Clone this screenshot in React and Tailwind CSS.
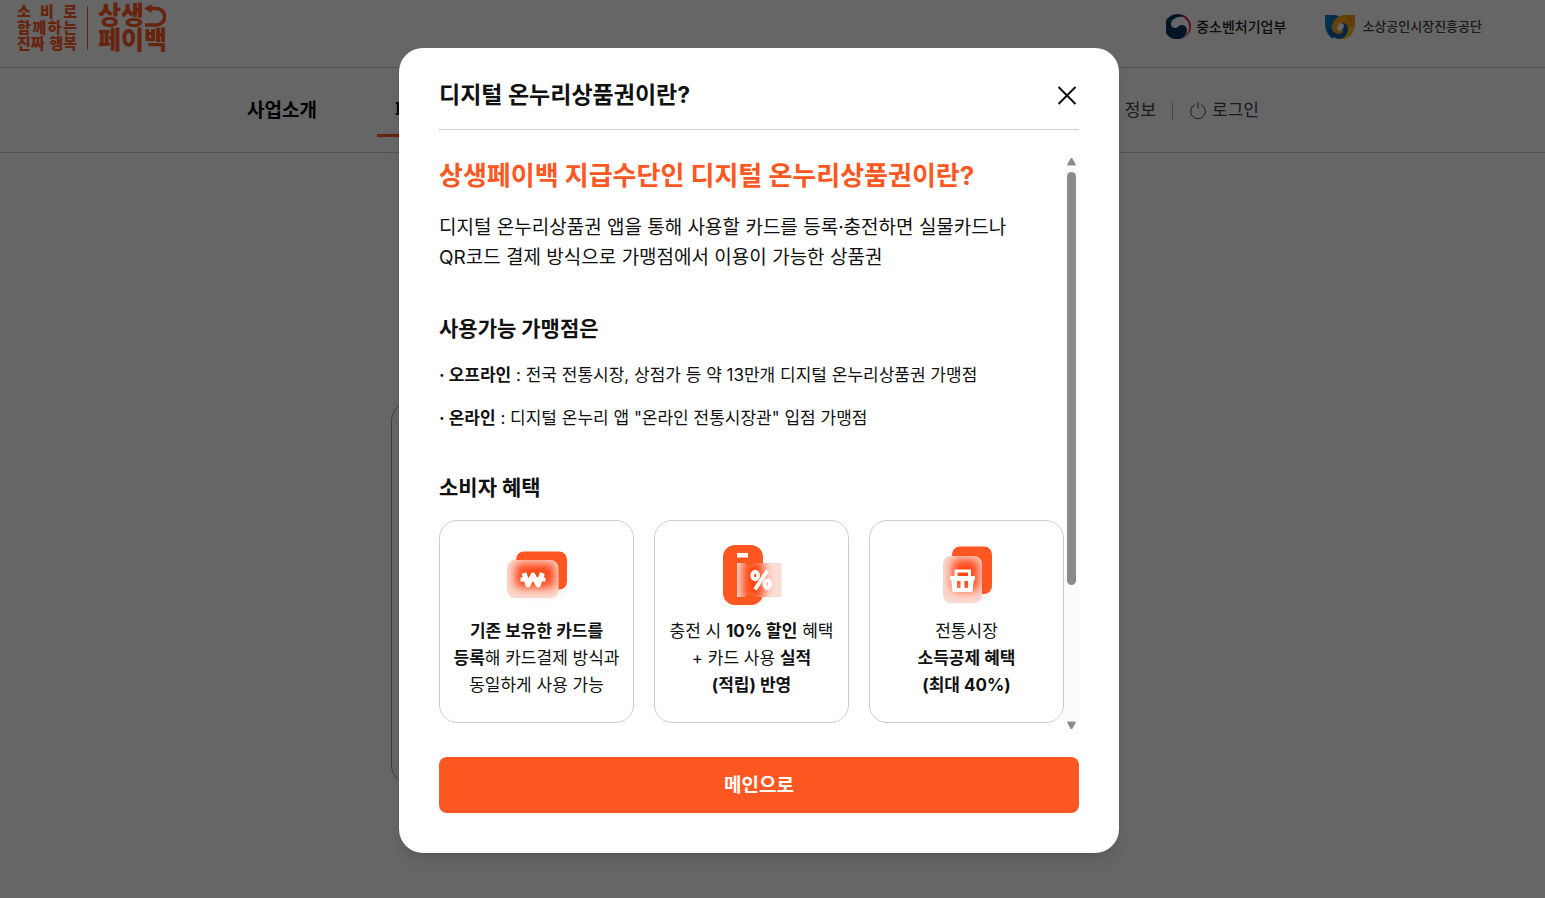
import { clsx } from "clsx";

const CARDS = [
  {
    icon: WonCardIcon,
    lines: [
      <b key="a">기존 보유한 카드를</b>,
      <span key="b">
        <b>등록</b>해 카드결제 방식과
      </span>,
      <span key="c">동일하게 사용 가능</span>,
    ],
  },
  {
    icon: CouponIcon,
    lines: [
      <span key="a">
        충전 시 <b>10% 할인</b> 혜택
      </span>,
      <span key="b">
        + 카드 사용 <b>실적</b>
      </span>,
      <b key="c">(적립) 반영</b>,
    ],
  },
  {
    icon: BasketIcon,
    lines: [
      <span key="a">전통시장</span>,
      <b key="b">소득공제 혜택</b>,
      <b key="c">(최대 40%)</b>,
    ],
  },
];

function WonCardIcon() {
  return (
    <svg viewBox="0 0 60 60" className="size-[60px] overflow-visible" aria-hidden="true">
      <defs>
        <filter id="won-blur" x="-50%" y="-50%" width="200%" height="200%">
          <feGaussianBlur stdDeviation="5" />
        </filter>
        <clipPath id="won-clip">
          <rect x="0" y="15" width="51.500" height="38" rx="8" />
        </clipPath>
      </defs>
      <rect x="8" y="12" width="48" height="38" rx="9" fill="#ff5722" opacity=".16" filter="url(#won-blur)" />
      <rect x="9" y="6.500" width="51" height="38" rx="8" fill="#ff5722" />
      <g clipPath="url(#won-clip)">
        <rect x="0" y="15" width="52" height="38" fill="#fbd8cf" />
        <rect x="8" y="18" width="40" height="25" rx="5" fill="#ff4712" filter="url(#won-blur)" />
      </g>
      <path d="M17 28l4 12 5-10 5 10 4.500-12" fill="none" stroke="#fff" strokeWidth="5" strokeLinejoin="round" />
      <path d="M13.500 34.500h25" stroke="#fff" strokeWidth="4" />
    </svg>
  );
}

function CouponIcon() {
  return (
    <svg viewBox="0 0 60 60" className="size-[60px] overflow-visible" aria-hidden="true">
      <defs>
        <filter id="cp-blur" x="-50%" y="-50%" width="200%" height="200%">
          <feGaussianBlur stdDeviation="5" />
        </filter>
        <clipPath id="cp-clip">
          <path d="M15 18h8a5 4 0 0 0 10 0h26.500v34H33a5 4 0 0 0-10 0h-8z" />
        </clipPath>
      </defs>
      <rect x="18" y="18" width="24" height="38" rx="9" fill="#ff5722" opacity=".35" filter="url(#cp-blur)" />
      <rect x="1" y="0" width="40" height="60" rx="12" fill="#ff5722" />
      <rect x="15" y="8" width="11" height="4.500" fill="#fff" />
      <g clipPath="url(#cp-clip)">
        <rect x="15" y="18" width="45" height="34" fill="#fbdcd5" />
        <rect x="20" y="14" width="22" height="42" rx="6" fill="#ff4a16" filter="url(#cp-blur)" />
      </g>
      <g fill="none" stroke="#fff" strokeWidth="3.800">
        <ellipse cx="33.200" cy="30.500" rx="2.900" ry="3.800" />
        <ellipse cx="45.200" cy="39" rx="2.900" ry="3.800" />
        <path d="M45.500 25.500L33 44.500" />
      </g>
    </svg>
  );
}

function BasketIcon() {
  return (
    <svg viewBox="0 0 60 60" className="size-[60px] overflow-visible" aria-hidden="true">
      <defs>
        <filter id="bk-blur" x="-50%" y="-50%" width="200%" height="200%">
          <feGaussianBlur stdDeviation="5" />
        </filter>
        <clipPath id="bk-clip">
          <rect x="6" y="11" width="39" height="47" rx="8" />
        </clipPath>
      </defs>
      <rect x="12" y="10" width="38" height="42" rx="9" fill="#ff5722" opacity=".2" filter="url(#bk-blur)" />
      <rect x="15" y="1.500" width="40" height="47.500" rx="8" fill="#ff5722" />
      <g clipPath="url(#bk-clip)">
        <rect x="6" y="11" width="39" height="47" fill="#fbd8cf" />
        <rect x="15" y="14" width="27" height="32" rx="5" fill="#ff4712" filter="url(#bk-blur)" />
      </g>
      <path d="M19 32v-6h13.500v6" fill="none" stroke="#fff" strokeWidth="3" />
      <path
        d="M13 31h25v4h-1.200L35.500 47h-20L14.200 35H13zM20 36v7h3.500v-7zM27.500 36v7H31v-7z"
        fill="#fff"
        fillRule="evenodd"
      />
    </svg>
  );
}

function BrandLogo() {
  return (
    <a href="#home" className="flex items-center text-[#ff5722]">
      <span className="flex w-[60px] flex-col text-[15px] leading-4 font-black">
        <span className="flex justify-between">
          <span>소</span>
          <span>비</span>
          <span>로</span>
        </span>
        <span className="flex justify-between">
          <span>함</span>
          <span>께</span>
          <span>하</span>
          <span>는</span>
        </span>
        <span className="flex justify-between">
          <span>진짜</span>
          <span>행복</span>
        </span>
      </span>
      <span className="mx-2.5 h-11 w-px bg-[#ff5722]" />
      <span className="flex flex-col text-[25px] leading-[25px] font-black">
        <span className="flex items-center">
          상생
          <svg viewBox="0 0 22 24" className="h-6 w-[22px]" fill="none" aria-hidden="true">
            <path d="M6 4.500h6.500a7.800 7.800 0 0 1 0 16.500H1" stroke="currentColor" strokeWidth="3.600" />
            <path d="M0 4.500L7.500 0v9z" fill="currentColor" />
          </svg>
        </span>
        <span>페이백</span>
      </span>
    </a>
  );
}

function MinistryMark() {
  return (
    <svg viewBox="0 0 25 25" className="size-[25px]" aria-hidden="true">
      <circle cx="12.500" cy="12.500" r="12.500" fill="#e4173e" />
      <circle cx="11.400" cy="13.300" r="11.800" fill="#fff" />
      <path
        d="M18 2.500A12.500 12.500 0 1 0 15 24.500C20 22 22 17.500 20.500 14c-1.500-3.800-6-4-8.500-1.300-2.200 2.300-6.800 1.500-7-2.200C4.600 6 10 2.300 18 2.500z"
        fill="#003764"
      />
    </svg>
  );
}

function AgencyMark() {
  return (
    <svg viewBox="0 0 30 24" className="h-6 w-[30px]" aria-hidden="true">
      <path d="M0 0h9c3 0 5 1 6 2.500L9 9 8 24C3 21 0 15 0 8z" fill="#0a7cc4" />
      <path d="M30 0v8c0 9-5 16-14 16l3-13-6-8c2-2 4-3 8-3z" fill="#f7941d" />
      <path d="M30 9c-.5 9-5.500 15-14 15l5-10z" fill="#fbb714" />
      <path d="M1.500 13C4 20 9 24 15 24c6-1.500 9-7 7.500-12C21.500 8.500 18.500 7 16 8l-7 9z" fill="#0c5aa8" />
      <path d="M21 0C13 0 7.500 5.500 7 11.500c-.3 4.500 3 7.500 6.500 7.500 2.500 0 4.500-1.500 5-4-4 2.500-7-2.500-3-6.500 2.500-1.700 5-1 7 2z" fill="#f9a51a" />
      <ellipse cx="15.500" cy="12" rx="3" ry="4" transform="rotate(30 15.500 12)" fill="#fff" />
    </svg>
  );
}

function Header() {
  return (
    <header className="bg-white">
      <div className="flex h-[68px] items-start justify-between border-b border-[#ccc] pt-[3px] pr-[63px] pl-[17px]">
        <BrandLogo />
        <div className="flex items-center gap-[39px] pt-[11px] text-[#222]">
          <a href="#ministry" className="flex items-center gap-[5px] text-sm font-medium">
            <MinistryMark />
            중소벤처기업부
          </a>
          <a href="#agency" className="flex items-center gap-[7px] text-[13px] font-medium text-[#444]">
            <AgencyMark />
            소상공인시장진흥공단
          </a>
        </div>
      </div>
      <div className="border-b border-[#ccc] pr-[27px]">
        <nav className="mx-auto flex h-[84px] w-full max-w-[1024px] items-center justify-between pr-3">
          <div className="flex h-full gap-[60px] text-[19px] font-bold text-black">
            <a href="#about" className="flex items-center pt-0.5">
              사업소개
            </a>
            <a href="#payback" className="relative flex items-center px-[18px] pt-0.5">
              페이백
              <span className="absolute inset-x-0 bottom-[15px] h-[3px] bg-[#ff5722]" />
            </a>
          </div>
          <div className="flex items-center pt-0.5 text-[17px] text-[#444]">
            <a href="#info">정보</a>
            <span className="mx-4 h-5 w-px bg-[#bbb]" />
            <a href="#login" className="flex items-center gap-[5px]">
              <svg viewBox="0 0 18 18" className="size-[18px]" fill="none" stroke="currentColor" aria-hidden="true">
                <path d="M6 2.800a7.300 7.300 0 1 0 6 0" />
                <path d="M9 .5v6" />
              </svg>
              로그인
            </a>
          </div>
        </nav>
      </div>
    </header>
  );
}

function Scrollbar() {
  return (
    <div className="flex w-[15px] shrink-0 flex-col items-center bg-[#fcfcfc] py-1" aria-hidden="true">
      <svg viewBox="0 0 9 8" className="h-2 w-[9px] shrink-0 fill-[#8b8b8b]">
        <path d="M4.500 0q.6 0 1 .6L8.600 6q.7 1.500-.8 1.500H1.200Q-.3 7.500.4 6L3.500.6Q3.900 0 4.500 0z" />
      </svg>
      <span className="mt-1.5 h-[413px] w-[9px] rounded-full bg-[#8b8b8b]" />
      <svg viewBox="0 0 9 8" className="mt-auto h-2 w-[9px] shrink-0 rotate-180 fill-[#8b8b8b]">
        <path d="M4.500 0q.6 0 1 .6L8.600 6q.7 1.500-.8 1.500H1.200Q-.3 7.500.4 6L3.500.6Q3.900 0 4.500 0z" />
      </svg>
    </div>
  );
}

function BenefitCard({ icon: Icon, lines }) {
  return (
    <li className="flex flex-1 flex-col items-center rounded-[18px] border border-[#ccc] pt-6 pb-[23px]">
      <Icon />
      <p className="mt-[13px] flex flex-col text-center text-[17px] leading-[27px] whitespace-nowrap">{lines}</p>
    </li>
  );
}

function SectionTitle({ children, className }) {
  return <h3 className={clsx("text-[21px] leading-8 font-bold", className)}>{children}</h3>;
}

function GiftCertificateModal() {
  return (
    <div
      role="dialog"
      aria-modal="true"
      aria-labelledby="modal-title"
      className="w-full max-w-[720px] rounded-3xl bg-white px-10 pb-10 text-[#111] shadow-lg"
    >
      <div className="flex h-[82px] items-center justify-between border-b border-[#ccc] pt-3">
        <h1 id="modal-title" className="text-[23px] leading-9 font-bold">
          디지털 온누리상품권이란?
        </h1>
        <button type="button" aria-label="닫기">
          <svg viewBox="0 0 24 24" className="size-6" fill="none" stroke="#111" strokeWidth="2" aria-hidden="true">
            <path d="M3.500 4l17 17M20.500 4l-17 17" />
          </svg>
        </button>
      </div>

      <div className="mt-6 flex h-[579px] overflow-hidden">
        <div className="min-w-0 flex-1">
          <h2 className="text-[26px] leading-[44px] font-bold text-[#ff5722]">
            상생페이백 지급수단인 디지털 온누리상품권이란?
          </h2>
          <p className="mt-[15px] text-[19px] leading-[30px]">
            디지털 온누리상품권 앱을 통해 사용할 카드를 등록·충전하면 실물카드나
            <br />
            QR코드 결제 방식으로 가맹점에서 이용이 가능한 상품권
          </p>

          <SectionTitle className="mt-10">사용가능 가맹점은</SectionTitle>
          <ul className="mt-4 flex flex-col gap-[15px] text-[17px] leading-7">
            <li>
              <b>· 오프라인</b> : 전국 전통시장, 상점가 등 약 13만개 디지털 온누리상품권 가맹점
            </li>
            <li>
              <b>· 온라인</b> : 디지털 온누리 앱 "온라인 전통시장관" 입점 가맹점
            </li>
          </ul>

          <SectionTitle className="mt-10">소비자 혜택</SectionTitle>
          <ul className="mt-4 flex gap-5">
            {CARDS.map((card, i) => (
              <BenefitCard key={i} {...card} />
            ))}
          </ul>
        </div>
        <Scrollbar />
      </div>

      <button type="button" className="mt-6 h-14 w-full rounded-lg bg-[#ff5722] pt-0.5 text-[19px] font-bold text-white">
        메인으로
      </button>
    </div>
  );
}

export default function App() {
  return (
    <div className="relative min-h-screen bg-white font-[Inter,'Noto_Sans_CJK_KR',sans-serif]">
      <Header />
      <main className="pt-[248px] pr-[27px]">
        <div className="mx-auto h-[384px] w-full max-w-[738px] px-px">
          <div className="mr-5 h-full rounded-[20px] border border-[#999]" />
        </div>
      </main>

      {/* dimmed layer + popup */}
      <div className="absolute inset-0 flex items-start justify-center bg-black/60 pt-12 pr-[27px]">
        <GiftCertificateModal />
      </div>
    </div>
  );
}
